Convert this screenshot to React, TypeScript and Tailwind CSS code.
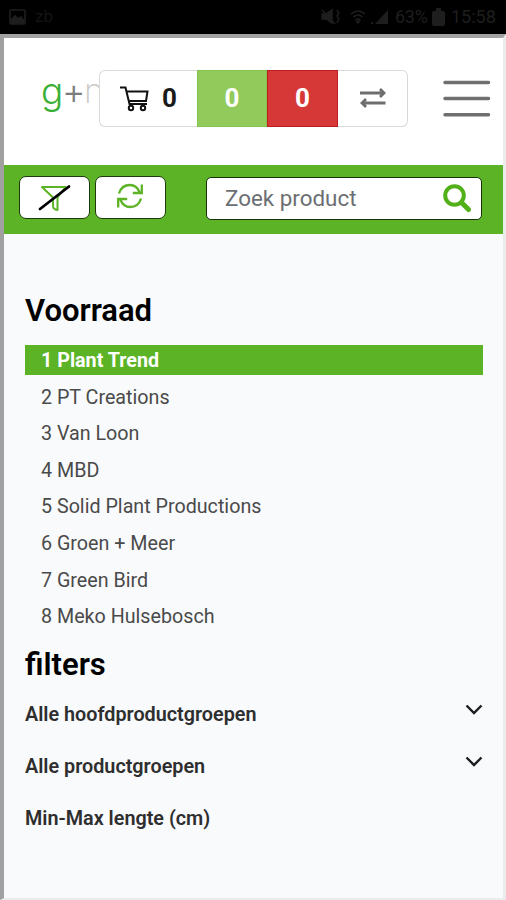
import React from 'react';

const stock = [
  '1 Plant Trend',
  '2 PT Creations',
  '3 Van Loon',
  '4 MBD',
  '5 Solid Plant Productions',
  '6 Groen + Meer',
  '7 Green Bird',
  '8 Meko Hulsebosch',
];

const filters = [
  { label: 'Alle hoofdproductgroepen', expandable: true },
  { label: 'Alle productgroepen', expandable: true },
  { label: 'Min-Max lengte (cm)', expandable: false },
];

const StatusBar = () => (
  <div className="flex h-[34px] shrink-0 items-center bg-black pl-[9px] pr-[9px] text-[#1e1e1e]">
    <svg className="h-4 w-[17px]" viewBox="0 0 17 16" fill="none" stroke="currentColor" strokeWidth="1.6">
      <rect x="1" y="1" width="15" height="14" rx="1" />
      <path d="M2 14v-3l4-4 3 3 3-2 3 4v2z" fill="currentColor" />
    </svg>
    <span className="ml-[9px] text-[17px] text-[#141414]">zb</span>
    <div className="ml-auto flex items-center">
      <svg className="h-[18px] w-5" viewBox="0 0 20 18" fill="none" stroke="currentColor" strokeWidth="1.5">
        <path d="M1 6h4l6-4v13l-6-4H1z" fill="currentColor" />
        <path d="M1 2l13 14M16 2l2 3-2 3 2 3-2 4" />
      </svg>
      <svg className="ml-[9px] h-4 w-4" viewBox="0 0 16 16" fill="none" stroke="currentColor" strokeWidth="1.6">
        <path d="M1 5q7-6 14 0M3.500 8q4.500-4 9 0M6 11q2-2 4 0l-2 3z" />
      </svg>
      <svg className="ml-[5px] h-4 w-[18px]" viewBox="0 0 18 16" fill="currentColor">
        <path d="M17 1v14H4zM0 13h2v2H0z" />
      </svg>
      <span className="ml-[6px] w-[33px] text-[18px] leading-none tracking-[-0.300px]">63%</span>
      <svg className="ml-[4px] h-[18px] w-[13px]" viewBox="0 0 13 18" fill="currentColor">
        <path d="M4 0h5v3h2q2 0 2 2v11q0 2-2 2H2q-2 0-2-2V5q0-2 2-2h2z" />
      </svg>
      <span className="ml-[6px] w-[46px] whitespace-nowrap text-[18px] leading-none">15:58</span>
    </div>
  </div>
);

const Header = () => (
  <header className="flex h-[127px] items-start bg-white">
    <div className="mt-[31px] ml-[37px] flex h-[57px] w-[58px] font-['Inter',sans-serif] text-[37px] leading-[44px] font-light">
      <span className="w-[21px] text-[#3bb036]">g</span>
      <span className="w-[23px] text-[36px] text-[#7d7d7d]">+</span>
      <span className="-ml-px w-[15px] text-[34px] font-extralight text-[#c8c8c8]">n</span>
    </div>
    <div className="relative mt-[32px] flex h-[57px] w-[309px] text-[26px] font-bold">
      <div className="flex w-[98px] items-center rounded-l-[6px] border border-r-0 border-[#d9d9d9] bg-white pl-5">
        <svg className="h-[27px] w-[30px]" viewBox="0 0 30 27" fill="none" stroke="#111" strokeWidth="2">
          <path d="M0 2.500h5.500l4 16.500h17.500M7 6.500h20.500l-1.500 9.500H9" />
          <circle cx="11" cy="23" r="2.200" />
          <circle cx="23" cy="23" r="2.200" />
        </svg>
        <span className="ml-[12px] text-[#1a1a1a]">0</span>
      </div>
      <div className="flex w-[70px] items-center justify-center border border-[#83c44d] bg-[#92cb5c] text-white">0</div>
      <div className="flex w-[71px] items-center justify-center border border-[#bd1c20] bg-[#d63838] text-white">0</div>
      <div className="flex w-[70px] items-center justify-center rounded-r-[6px] border border-l-0 border-[#d9d9d9] bg-white">
        <svg className="mb-[2px] h-5 w-[26px]" viewBox="0 0 26 20" fill="none" stroke="#6e6e6e" strokeWidth="2.800">
          <path d="M0 5h24M20 1l4 4-4 4M25.500 15H2M6 11l-4 4 4 4" />
        </svg>
      </div>
    </div>
    <svg className="mt-[41px] ml-[33px] h-10 w-[50px]" viewBox="0 0 50 40" fill="none" stroke="#6f6f6f" strokeWidth="3.500" strokeLinecap="round">
      <path d="M4 3.500h43.500M4 19.500h43.500M4 35.800h43.500" />
    </svg>
  </header>
);

const Toolbar = () => (
  <div className="flex h-[69px] items-start bg-[#5bb325] pt-[11px] pl-[15px]">
    <button className="flex h-[43px] w-[71px] items-center justify-center rounded-[7px] border border-[#1c3a0c] bg-white">
      <svg className="h-[29px] w-[34px]" viewBox="0 0 34 29" fill="none">
        <path d="M4 4h23.500L19.500 14.500V27q-4.500-.5-4.500-4.500v-8z" stroke="#5bb325" strokeWidth="2" strokeLinejoin="round" />
        <path d="M2 26L31 3.500" stroke="#000" strokeWidth="2.800" strokeLinecap="round" />
      </svg>
    </button>
    <button className="ml-[5px] flex h-[43px] w-[71px] items-center justify-center rounded-[7px] border border-[#1c3a0c] bg-white">
      <svg className="mr-[2px] mb-[3px] h-[26px] w-[28px]" viewBox="0 0 28 26" fill="none" stroke="#5bb325" strokeWidth="2.300">
        <path d="M3 10.500Q5.500 2 14 2q6.500 0 9.500 7M25.800 1.500v8.500h-9" />
        <path d="M25 15.500Q22.500 24 14 24q-6.500 0-9.500-7M2.200 24.500V16h9" />
      </svg>
    </button>
    <div className="mt-px ml-[40px] flex h-[43px] w-[276px] items-center rounded-[5px] border border-[#173009] bg-white">
      <input
        className="ml-[18px] w-[205px] text-[22.400px] text-[#666] outline-none placeholder:text-[#6c6f72]"
        placeholder="Zoek product"
      />
      <svg className="ml-[13px] h-[29px] w-[29px]" viewBox="0 0 29 29" fill="none" stroke="#52b018">
        <circle cx="11.500" cy="11.500" r="9.300" strokeWidth="4" />
        <path d="M18.500 18.500l7 7" strokeWidth="5" strokeLinecap="round" />
      </svg>
    </div>
  </div>
);

export default function App() {
  return (
    <div className="flex h-[900px] w-[506px] flex-col overflow-hidden font-['Roboto',sans-serif]">
      <StatusBar />
      <div className="flex-1 border-t-4 border-r-[3px] border-b-2 border-l-4 border-t-[#a3a3a3] border-r-[#ebebeb] border-b-[#ebebeb] border-l-[#a0a0a0] bg-[#f9fafc]">
        <Header />
        <Toolbar />
        <main className="pr-[20px] pl-[21px]">
          <h2 className="mt-[57px] text-[31px] leading-[40px] font-semibold text-black">Voorraad</h2>
          <ul className="mt-[14px]">
            {stock.map((name, i) => (
              <li
                key={name}
                className={`mb-[6.600px] h-[30px] pl-[16px] text-[19.700px] leading-[31px] ${
                  i === 0 ? 'bg-[#5bb325] font-bold text-white' : 'text-[#4a4a4a]'
                }`}
              >
                {name}
              </li>
            ))}
          </ul>
          <h2 className="mt-[14px] text-[31px] leading-[40px] font-semibold text-black">filters</h2>
          <div className="mt-[4px]">
            {filters.map((filter) => (
              <div key={filter.label} className="flex h-[52px] items-center justify-between text-[19.800px] font-semibold text-[#2e2e2e]">
                {filter.label}
                {filter.expandable && (
                  <svg className="mb-[11px] h-3 w-[18px]" viewBox="0 0 18 12" fill="none" stroke="#1d1d1d" strokeWidth="2.400">
                    <path d="M1.500 1.500L9 9l7.500-7.500" />
                  </svg>
                )}
              </div>
            ))}
          </div>
        </main>
      </div>
    </div>
  );
}
